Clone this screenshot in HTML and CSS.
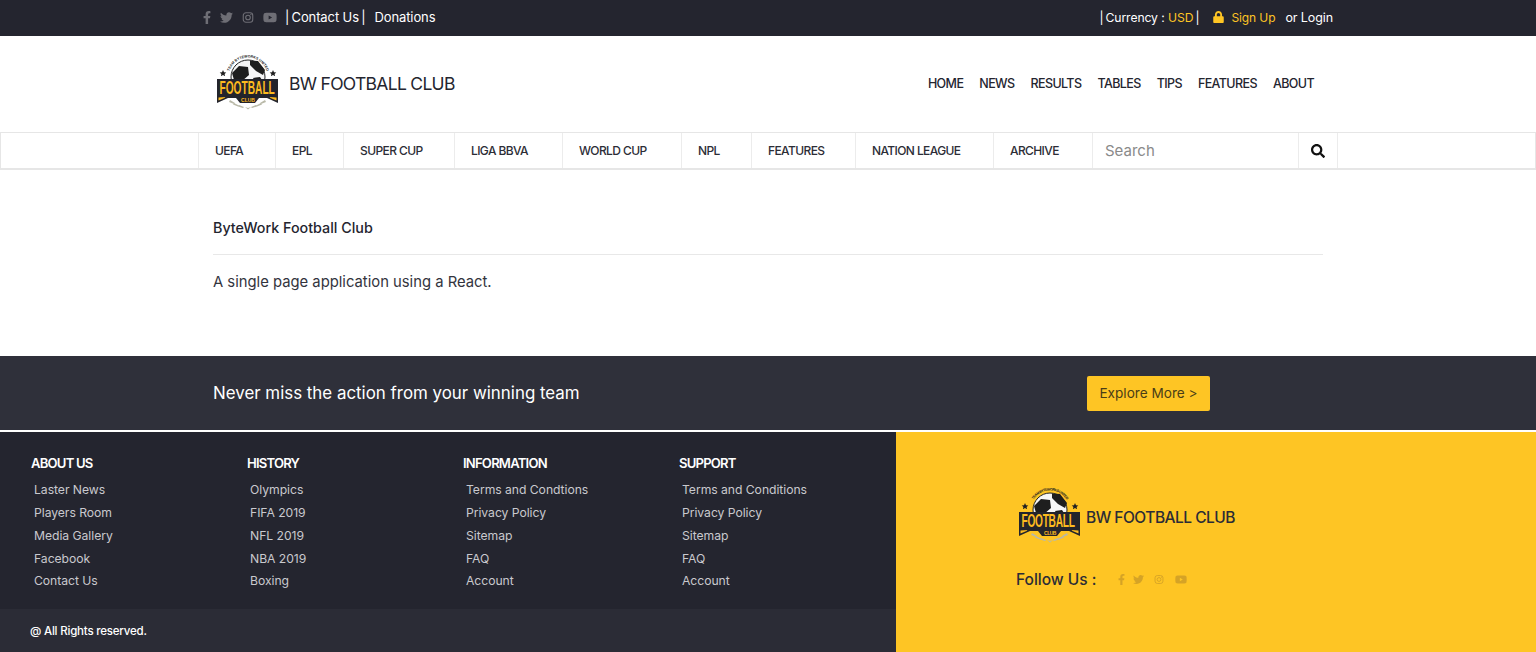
FILE: index.html

```html
<!DOCTYPE html>
<html>
<head>
    <title>BW Football Club</title>
    <link rel="stylesheet" href="styles.css">
</head>
<body>
    <svg class="defs" width="0" height="0">
        <symbol id="i-fb" viewBox="0 0 320 512"><path d="M279.14 288l14.22-92.66h-88.91v-60.13c0-25.35 12.42-50.06 52.24-50.06h40.42V6.26S260.43 0 225.36 0c-73.22 0-121.08 44.38-121.08 124.72v70.62H22.89V288h81.39v224h100.17V288z"/></symbol>
        <symbol id="i-tw" viewBox="0 0 512 512"><path d="M459.37 151.716c.325 4.548.325 9.097.325 13.645 0 138.72-105.583 298.558-298.558 298.558-59.452 0-114.68-17.219-161.137-47.106 8.447.974 16.568 1.299 25.34 1.299 49.055 0 94.213-16.568 130.274-44.832-46.132-.975-84.792-31.188-98.112-72.772 6.498.974 12.995 1.624 19.818 1.624 9.421 0 18.843-1.3 27.614-3.573-48.081-9.747-84.143-51.98-84.143-102.985v-1.299c13.969 7.797 30.214 12.67 47.431 13.319-28.264-18.843-46.781-51.005-46.781-87.391 0-19.492 5.197-37.36 14.294-52.954 51.655 63.675 129.3 105.258 216.365 109.807-1.624-7.797-2.599-15.918-2.599-24.04 0-57.828 46.782-104.934 104.934-104.934 30.213 0 57.502 12.67 76.67 33.137 23.715-4.548 46.456-13.32 66.599-25.34-7.798 24.366-24.366 44.833-46.132 57.827 21.117-2.273 41.584-8.122 60.426-16.243-14.292 20.791-32.161 39.308-52.628 54.253z"/></symbol>
        <symbol id="i-ig" viewBox="0 0 24 24"><rect x="2.500" y="2.500" width="19" height="19" rx="5.500" fill="none" stroke="currentColor" stroke-width="2.200"/><circle cx="12" cy="12" r="4.600" fill="none" stroke="currentColor" stroke-width="2.200"/><circle cx="17.800" cy="6.200" r="1.400"/></symbol>
        <symbol id="i-yt" viewBox="0 0 576 512"><path d="M549.655 124.083c-6.281-23.65-24.787-42.276-48.284-48.597C458.781 64 288 64 288 64S117.22 64 74.629 75.486c-23.497 6.322-42.003 24.947-48.284 48.597-11.412 42.867-11.412 132.305-11.412 132.305s0 89.438 11.412 132.305c6.281 23.65 24.787 41.5 48.284 47.821C117.22 448 288 448 288 448s170.78 0 213.371-11.486c23.497-6.321 42.003-24.171 48.284-47.821 11.412-42.867 11.412-132.305 11.412-132.305s0-89.438-11.412-132.305zm-317.51 213.508V175.185l142.739 81.205-142.739 81.201z"/></symbol>
        <symbol id="i-lock" viewBox="0 0 448 512"><path d="M400 224h-24v-72C376 68.2 307.8 0 224 0S72 68.2 72 152v72H48c-26.5 0-48 21.5-48 48v192c0 26.5 21.5 48 48 48h352c26.5 0 48-21.5 48-48V272c0-26.5-21.5-48-48-48zm-104 0H152v-72c0-39.7 32.3-72 72-72s72 32.3 72 72v72z"/></symbol>
        <symbol id="i-search" viewBox="0 0 512 512"><path d="M505 442.7L405.3 343c-4.5-4.5-10.6-7-17-7H372c27.6-35.3 44-79.7 44-128C416 93.1 322.9 0 208 0S0 93.1 0 208s93.1 208 208 208c48.3 0 92.7-16.4 128-44v16.3c0 6.4 2.5 12.5 7 17l99.7 99.7c9.4 9.4 24.6 9.4 33.9 0l28.3-28.3c9.4-9.4 9.4-24.6.1-34zM208 336c-70.7 0-128-57.2-128-128 0-70.7 57.2-128 128-128 70.7 0 128 57.2 128 128 0 70.7-57.2 128-128 128z"/></symbol>
        <symbol id="logo-art" viewBox="0 0 62 58">
            <circle cx="31" cy="23" r="17" fill="#f6f6f6" stroke="#222" stroke-width="1"/>
            <path d="M15 19l7-7 9 1 1 8-7 6-8-1zM33 6.500l8 .500 7 9-2 5-7-4-6-6zM36 24l7-1 2 3h-8z" fill="#1e1e1e"/>
            <path d="M6 16l1 2.200 2.300.200-1.700 1.500.5 2.300-2.100-1.200-2.100 1.200.5-2.300-1.700-1.500 2.300-.2zM56 16l1 2.200 2.300.200-1.700 1.500.5 2.300-2.100-1.200-2.100 1.200.5-2.300-1.700-1.500 2.300-.2z" fill="#222"/>
            <path d="M0 25h61v24l-11-5h-8l-4 5h-15l-4-5h-8l-11 5z" fill="#23242c"/>
            <path d="M1.500 46.500v-3l7-.5-1 1zM59.500 46.500v-3l-7-.5 1 1z" fill="#fdbb1f"/>
            <path d="M13 46l5 3-1 1-5-2zM17 49l5 2.500-1 1-5-2zM22 51l5 2-1 1-5-1.500zM48 46l-5 3 1 1 5-2zM44 49l-5 2.500 1 1 5-2zM39 51l-5 2 1 1 5-1.500zM28 53l3 2.500 3-2.500-3 1z" fill="#b9b9a8"/>
        </symbol>
    </svg>

    <div class="topbar">
        <div class="wrap topbar-in">
            <div class="top-left">
                <div class="socials">
                    <svg class="ic ic-fb"><use href="#i-fb"/></svg>
                    <svg class="ic ic-tw"><use href="#i-tw"/></svg>
                    <svg class="ic ic-ig"><use href="#i-ig"/></svg>
                    <svg class="ic ic-yt"><use href="#i-yt"/></svg>
                </div>
                <a class="contact">|&#8201;Contact Us&#8201;|</a>
                <a class="donate">Donations</a>
            </div>
            <div class="top-right">
                <span class="currency">|&#8201;Currency : <b class="yellow">USD</b>&#8201;|</span>
                <svg class="ic-lock"><use href="#i-lock"/></svg>
                <a class="yellow signup">Sign Up</a>
                <a class="login">or Login</a>
            </div>
        </div>
    </div>

    <header class="wrap header">
        <div class="brand">
            <svg class="logo" viewBox="0 0 62 58">
                <use href="#logo-art"/>
                <path id="arc-top" d="M11.800 19.600 A19.500 19.500 0 0 1 50.200 19.600" fill="none"/>
                <text class="logo-ring" font-size="3.600"><textPath href="#arc-top" startOffset="50%" text-anchor="middle">TEAM BYTEWORKS UNITED</textPath></text>
                <text class="logo-word" transform="translate(2.500 39.500) scale(.55 1)" font-size="18.500">FOOTBALL</text>
                <text class="logo-word" x="31" y="48" font-size="5" text-anchor="middle">CLUB</text>
            </svg>
            <span class="brand-name">BW FOOTBALL CLUB</span>
        </div>
        <nav class="mainnav">
            <a>HOME</a>
            <a>NEWS</a>
            <a>RESULTS</a>
            <a>TABLES</a>
            <a>TIPS</a>
            <a>FEATURES</a>
            <a>ABOUT</a>
        </nav>
    </header>

    <div class="catbar">
        <div class="wrap catgrid">
            <a>UEFA</a>
            <a>EPL</a>
            <a>SUPER CUP</a>
            <a>LIGA BBVA</a>
            <a>WORLD CUP</a>
            <a>NPL</a>
            <a>FEATURES</a>
            <a>NATION LEAGUE</a>
            <a>ARCHIVE</a>
            <input class="search" type="text" placeholder="Search">
            <button class="search-btn"><svg class="ic-search"><use href="#i-search"/></svg></button>
        </div>
    </div>

    <main class="wrap content">
        <h1>ByteWork Football Club</h1>
        <hr>
        <p>A single page application using a React.</p>
    </main>

    <section class="cta">
        <div class="wrap cta-in">
            <h2>Never miss the action from your winning team</h2>
            <a class="explore">Explore More &gt;</a>
        </div>
    </section>

    <footer class="footer">
        <div class="foot-left">
            <div class="foot-cols">
                <div class="foot-col">
                    <h3>ABOUT US</h3>
                    <a>Laster News</a>
                    <a>Players Room</a>
                    <a>Media Gallery</a>
                    <a>Facebook</a>
                    <a>Contact Us</a>
                </div>
                <div class="foot-col">
                    <h3>HISTORY</h3>
                    <a>Olympics</a>
                    <a>FIFA 2019</a>
                    <a>NFL 2019</a>
                    <a>NBA 2019</a>
                    <a>Boxing</a>
                </div>
                <div class="foot-col">
                    <h3>INFORMATION</h3>
                    <a>Terms and Condtions</a>
                    <a>Privacy Policy</a>
                    <a>Sitemap</a>
                    <a>FAQ</a>
                    <a>Account</a>
                </div>
                <div class="foot-col">
                    <h3>SUPPORT</h3>
                    <a>Terms and Conditions</a>
                    <a>Privacy Policy</a>
                    <a>Sitemap</a>
                    <a>FAQ</a>
                    <a>Account</a>
                </div>
            </div>
            <div class="copyright">@ All Rights reserved.</div>
        </div>
        <div class="foot-right">
            <div class="foot-brand">
                <svg class="logo" viewBox="0 0 62 58">
                    <use href="#logo-art"/>
                    <path id="arc-foot" d="M11.800 19.600 A19.500 19.500 0 0 1 50.200 19.600" fill="none"/>
                    <text class="logo-ring" font-size="3.600"><textPath href="#arc-foot" startOffset="50%" text-anchor="middle">TEAM BYTEWORKS UNITED</textPath></text>
                    <text class="logo-word" transform="translate(2.500 39.500) scale(.55 1)" font-size="18.500">FOOTBALL</text>
                    <text class="logo-word" x="31" y="48" font-size="5" text-anchor="middle">CLUB</text>
                </svg>
                <span>BW FOOTBALL CLUB</span>
            </div>
            <div class="follow">
                <span>Follow Us :</span>
                <div class="socials">
                    <svg class="ic ic-fb"><use href="#i-fb"/></svg>
                    <svg class="ic ic-tw"><use href="#i-tw"/></svg>
                    <svg class="ic ic-ig"><use href="#i-ig"/></svg>
                    <svg class="ic ic-yt"><use href="#i-yt"/></svg>
                </div>
            </div>
        </div>
    </footer>
</body>
</html>
```

FILE: styles.css

```css
* { box-sizing: border-box; }
html, body { margin: 0; padding: 0; }
body { font-family: Inter, "Noto Sans", sans-serif; color: #24252f; background: #fff; overflow-x: hidden; }
a { color: inherit; text-decoration: none; }
.defs { display: block; height: 0; }
.wrap { width: 1140px; margin: 0 auto; }
.yellow { color: #fec524; font-weight: 400; }

/* top bar */
.topbar { height: 36px; background: #24252f; color: #fff; font-size: 12.5px; letter-spacing: -0.1px; }
.topbar-in { height: 36px; display: flex; justify-content: space-between; align-items: center; padding: 0 5px 2px; }
.top-left, .top-right { display: flex; align-items: center; }
.top-left { font-size: 13px; }
.socials { display: flex; align-items: center; color: #6e6e75; fill: currentColor; }
.ic { display: block; height: 13px; }
.ic-fb { width: 8px; margin-right: 9px; }
.ic-tw { width: 13px; margin-right: 9px; }
.ic-ig { width: 12px; margin-right: 9px; }
.ic-yt { width: 14px; }
.contact { margin-left: 8px; }
.donate { margin-left: 9px; }
.currency { font-size: 12.2px; }
.ic-lock { width: 11px; height: 12px; margin-left: 14px; margin-right: 7px; fill: #fec524; }
.signup { font-size: 12px; }
.login { margin-left: 10px; }

/* logo row */
.header { height: 96px; display: flex; justify-content: space-between; align-items: center; padding: 0 24px 2px 19px; }
.brand { display: flex; align-items: center; }
.logo { width: 62px; height: 58px; display: block; flex: none; }
.logo-word { font-family: "Liberation Sans", sans-serif; font-weight: 700; fill: #fdbb1f; }
.logo-ring { font-family: "Liberation Sans", sans-serif; font-weight: 700; fill: #222; }
.brand-name { margin-left: 10px; font-size: 17.5px; letter-spacing: -0.7px; color: #24252f; }
.mainnav { display: flex; gap: 16px; font-size: 12.5px; font-weight: 500; letter-spacing: -0.6px; }

/* category bar */
.catbar { height: 38px; border: 1px solid #e6e6e6; border-bottom-width: 2px; }
.catgrid { display: grid; grid-template-columns: 77px 68px 111px 108px 119px 70px 104px 138px 99px 206px 40px; height: 35px; margin-left: 197px; }
.catgrid a { display: flex; align-items: center; padding-left: 16px; border-left: 1px solid #ececec; font-size: 12px; font-weight: 500; letter-spacing: -0.6px; color: #2c2d36; }
.search { border: 0; border-left: 1px solid #ececec; padding: 0 0 0 12px; font-family: inherit; font-size: 15px; outline: 0; min-width: 0; }
.search::placeholder { color: #8a8a8a; opacity: 1; }
.search-btn { border: 0; border-left: 1px solid #ececec; border-right: 1px solid #ececec; background: #fff; padding: 0; display: flex; align-items: center; justify-content: center; }
.ic-search { width: 14px; height: 14px; fill: #111; }

/* content */
.content { height: 186px; padding: 48px 15px 0; }
.content h1 { margin: 0; font-size: 14.3px; line-height: 20px; font-weight: 500; color: #24252f; }
.content hr { margin: 16px 0 0; border: 0; border-top: 1px solid #e8e8e8; }
.content p { margin: 17px 0 0; font-size: 14.8px; line-height: 20px; color: #33343d; }

/* call to action */
.cta { height: 74px; background: #2f303a; }
.cta-in { height: 74px; display: flex; align-items: center; padding-left: 15px; }
.cta h2 { margin: 0; width: 874px; font-size: 16.9px; font-weight: 400; color: #fff; }
.explore { width: 123px; height: 35px; display: flex; align-items: center; justify-content: center; background: #fec524; border-radius: 2px; font-size: 13.6px; color: #4a3d17; }

/* footer */
.footer { display: flex; height: 222px; border-top: 2px solid #fff; }
.foot-left { width: 896px; display: flex; flex-direction: column; background: #24252f; }
.foot-cols { flex: 1; display: grid; grid-template-columns: repeat(4, 216px); padding: 23px 0 0 31px; }
.foot-col h3 { margin: 0 0 7.3px; font-size: 13.1px; line-height: 17px; font-weight: 600; letter-spacing: -0.8px; color: #fff; }
.foot-col a { display: block; padding-left: 3px; font-size: 12.2px; line-height: 22.8px; letter-spacing: -0.05px; color: #c9c9ce; }
.copyright { height: 43px; display: flex; align-items: center; padding-left: 30px; background: #2b2c36; color: #fff; font-size: 11.5px; font-weight: 500; letter-spacing: -0.2px; }
.foot-right { flex: 1; background: #fec524; padding: 55px 0 0 123px; }
.foot-brand { display: flex; align-items: center; font-size: 15.5px; font-weight: 500; letter-spacing: -0.5px; color: #2b2c36; }
.foot-brand span { margin-left: 5px; padding-top: 2px; }
.follow { display: flex; align-items: center; margin: 24px 0 0 -3px; padding-top: 1px; font-size: 15.5px; font-weight: 500; color: #2b2c36; }
.follow .socials { margin-left: 21px; color: #d5a326; }
.follow .ic { height: 11px; }
.follow .ic-fb { width: 7px; margin-right: 8px; }
.follow .ic-tw { width: 11px; margin-right: 10px; }
.follow .ic-ig { width: 10px; margin-right: 11px; }
.follow .ic-yt { width: 12px; }
```
